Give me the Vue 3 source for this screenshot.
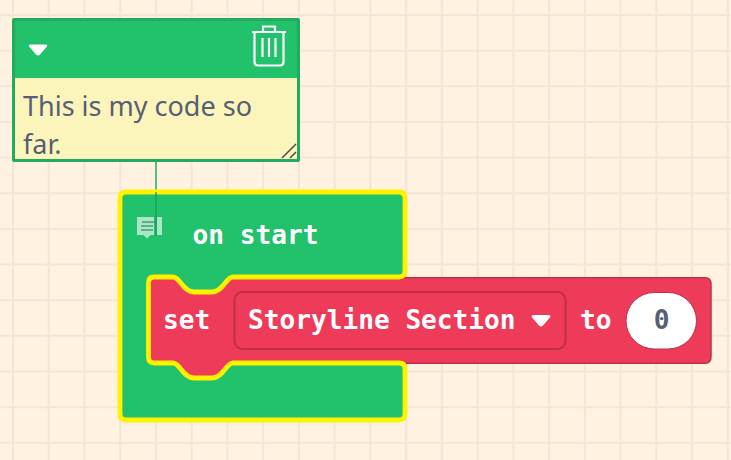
<script setup>
const gridX = Array.from({ length: 21 }, (_, i) => 13 + i * 35.74)
const gridY = Array.from({ length: 13 }, (_, i) => 15 + i * 35.65)
const redPath = 'M154 277 H173 C180 277 183 292 194 292 H212 C223 292 226 277 233 277 L240 277.800 H705 Q711 277.800 711 284 V357 Q711 363.200 705 363.200 L240 363.200 L233 363 C226 363 223 378 212 378 H194 C183 378 180 363 173 363 H154 Q148.5 363 148.5 357 V283 Q148.5 277 154 277 Z'
const outlinePath = 'M127 192 H399 Q405 192 405 198 V271 Q405 277 399 277 H233 C226 277 223 292 212 292 H194 C183 292 180 277 173 277 H154 Q148.5 277 148.5 283 V357 Q148.5 363 154 363 H173 C180 363 183 378 194 378 H212 C223 378 226 363 233 363 H399 Q405 363 405 369 V414 Q405 420 399 420 H126 Q120 420 120 414 V198 Q120 192 126 192 Z'
</script>

<template>
  <div class="canvas">
    <svg class="stage" width="731" height="460" viewBox="0 0 731 460">
      <line v-for="x in gridX" :key="'x' + x" class="grid" :x1="x" y1="0" :x2="x" y2="460" />
      <line v-for="y in gridY" :key="'y' + y" class="grid" x1="0" :y1="y" x2="731" :y2="y" />

      <line class="link" x1="156" y1="160" x2="156" y2="192" />
      <path class="green" :d="outlinePath" />
      <path class="red" :d="redPath" />
      <path class="highlight" :d="outlinePath" />

      <g class="note-icon">
        <path class="note-icon-fill" d="M137 217 H154 V235 H150.5 L147 238.5 L143.5 235 H137 Z" />
        <rect class="note-icon-fill" x="157" y="217" width="5" height="18" />
        <path class="note-icon-lines" d="M142 222 H155 M141 226 H153 M141 230 H153" />
      </g>
      <line class="link-over" x1="156" y1="192" x2="156" y2="236" />

      <text class="label" x="192.500" y="244">on start</text>
      <text class="label" x="163" y="329">set</text>

      <rect class="field" x="234.500" y="292" width="331" height="57" rx="8" />
      <text class="label" x="248" y="329">Storyline Section</text>
      <path class="caret" d="M534 315 H548 Q552 315 549.500 318 L543 325.500 Q541 327.500 539 325.500 L532.500 318 Q530 315 534 315 Z" />

      <text class="label" x="580" y="329">to</text>
      <rect class="pill" x="626" y="292.500" width="70.500" height="56.500" rx="28.250" />
      <text class="label zero" x="661.500" y="329">0</text>
    </svg>

    <section class="comment">
      <header class="comment-head">
        <svg class="comment-caret" width="20" height="12" viewBox="0 0 20 12">
          <path d="M3 0.5 H17 Q20.500 0.500 18.500 3 L12 10.500 Q10 12.500 8 10.500 L1.500 3 Q-0.500 0.500 3 0.500 Z" />
        </svg>
        <svg class="trash" width="36" height="42" viewBox="0 0 36 42">
          <path d="M12 6 V1.500 H24 V6 M1 7 H35 M3.500 7 V37 Q3.500 40.500 7 40.500 H29 Q32.500 40.500 32.500 37 V7 M11.500 13 V32 M18 13 V32 M24.500 13 V32" />
        </svg>
      </header>
      <div class="comment-body">
        <p class="comment-text">This is my code so far.</p>
        <svg class="resize" width="16" height="16" viewBox="0 0 16 16">
          <path d="M1 15 L15 1 M9 15 L15 9" />
        </svg>
      </div>
    </section>
  </div>
</template>

<style scoped>
.canvas {
  position: relative;
  width: 731px;
  height: 460px;
  overflow: hidden;
  background: #fff2e1;
}
.stage {
  display: block;
}
.grid {
  stroke: #f4e5d7;
  stroke-width: 2;
}
.link {
  stroke: #27ae60;
  stroke-width: 1.5;
}
.link-over {
  stroke: #1b9f58;
  stroke-width: 1.500;
}
.green {
  fill: #22c16b;
}
.red {
  fill: #ef3b5a;
  stroke: #bf2f48;
  stroke-width: 1.500;
}
.highlight {
  fill: none;
  stroke: #fff200;
  stroke-width: 4.800;
}
.note-icon-fill {
  fill: #a9e8c6;
}
.note-icon-lines {
  stroke: #4a9878;
  stroke-width: 1.500;
  fill: none;
}
.label {
  font-family: "DejaVu Sans Mono", monospace;
  font-weight: 700;
  font-size: 26.150px;
  fill: #fff;
}
.zero {
  fill: #575e75;
  text-anchor: middle;
}
.field {
  fill: #ef3b5a;
  stroke: #bf2f48;
  stroke-width: 2;
}
.caret {
  fill: #fff;
}
.pill {
  fill: #fff;
  stroke: #bf2f48;
  stroke-width: 1;
}
.comment {
  position: absolute;
  left: 12px;
  top: 18px;
  width: 288px;
  height: 144px;
  box-sizing: border-box;
  border: 3px solid #22ab5f;
  border-radius: 2px;
  display: flex;
  flex-direction: column;
  background: #22c16b;
}
.comment-head {
  box-sizing: border-box;
  flex: 0 0 57px;
  display: flex;
  align-items: flex-start;
  justify-content: space-between;
  padding: 4px 10px 0 13px;
}
.comment-caret {
  margin-top: 19px;
}
.comment-caret path {
  fill: #fff;
}
.trash path {
  fill: none;
  stroke: #fff;
  stroke-width: 2.200;
}
.comment-body {
  position: relative;
  flex: 1;
  min-height: 0;
  background: #fbf5bc;
}
.comment-text {
  margin: 0;
  padding: 9px 8px 0 8px;
  font-family: "Noto Sans", "Open Sans", sans-serif;
  font-size: 27px;
  line-height: 38px;
  color: #575e75;
}
.resize {
  position: absolute;
  right: 0;
  bottom: 0;
}
.resize path {
  stroke: #4a4a4a;
  stroke-width: 1.500;
  fill: none;
}
</style>
